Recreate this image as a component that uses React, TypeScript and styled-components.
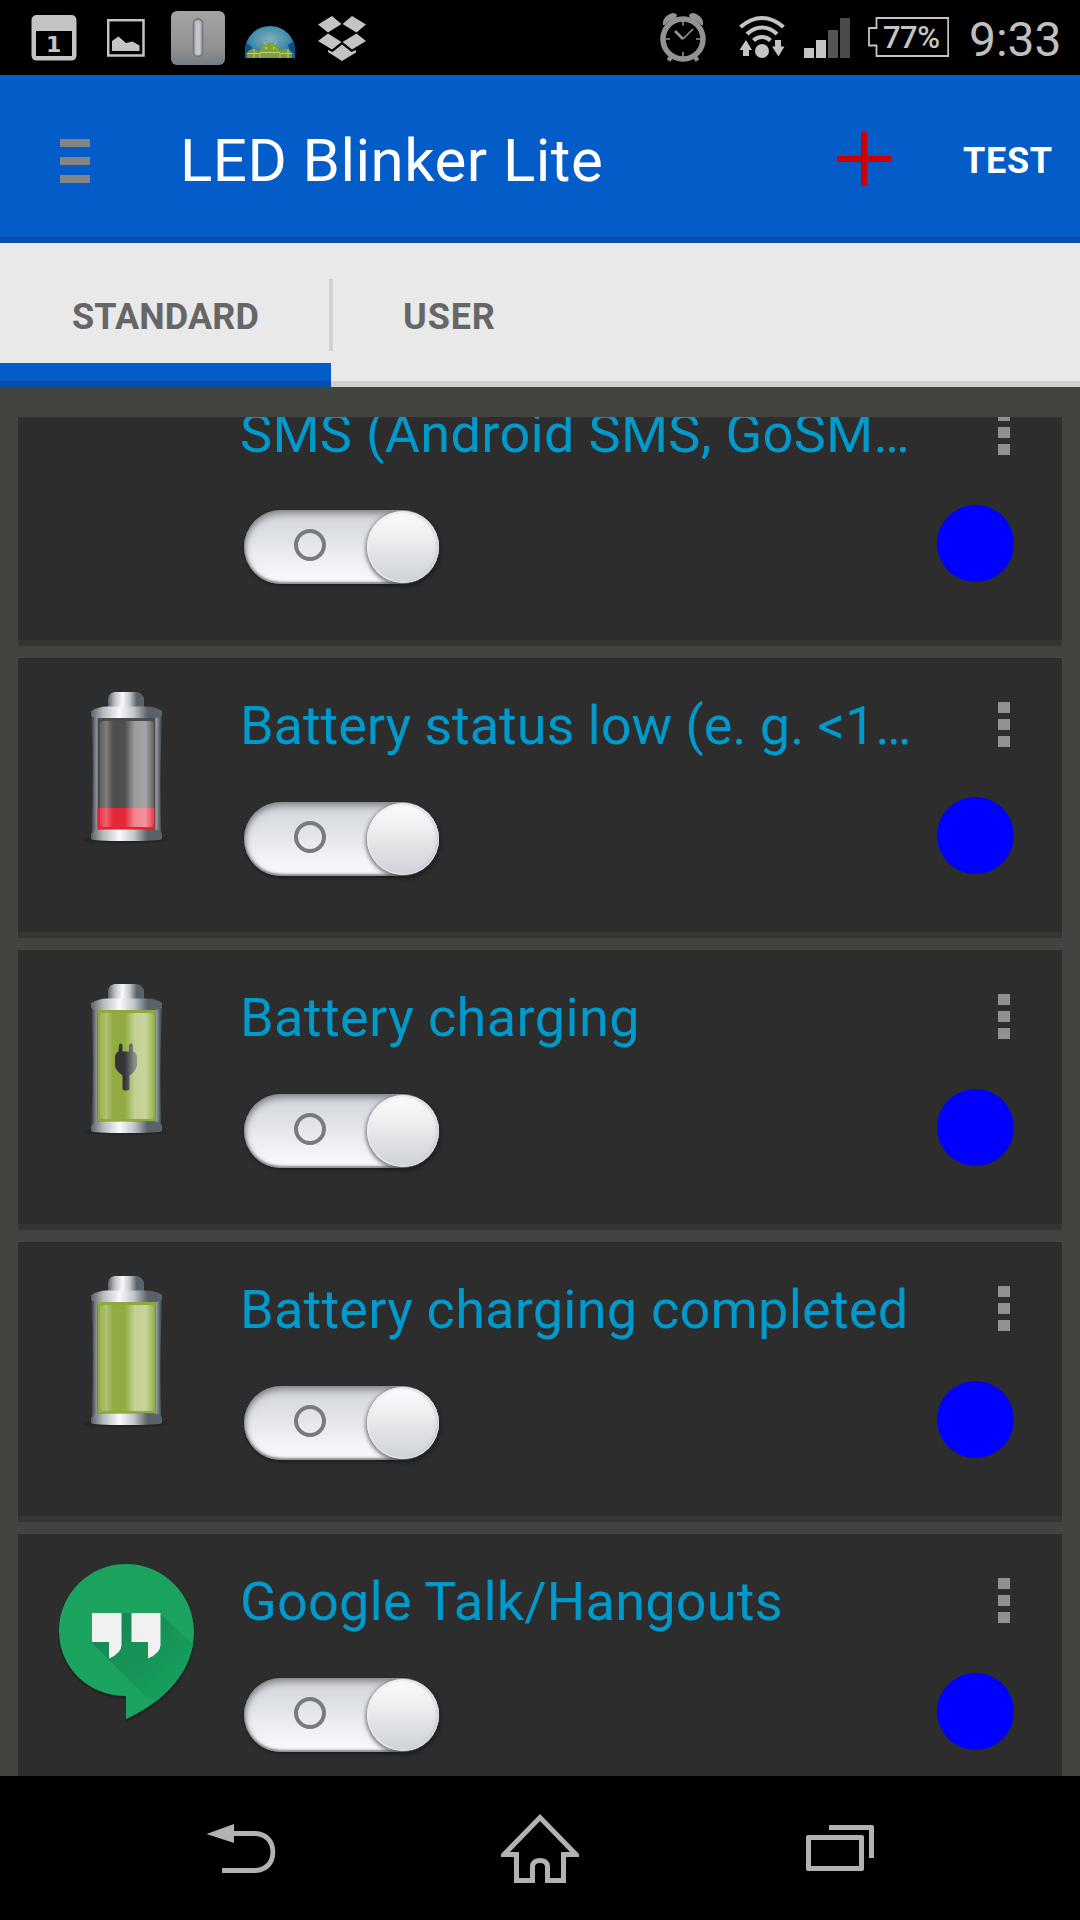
import React from "react";
import styled, { createGlobalStyle } from "styled-components";

const GlobalStyle = createGlobalStyle`
  *, *::before, *::after { box-sizing: border-box; }
  html, body { margin: 0; padding: 0; background: #000; }
  body { font-family: Roboto, "Noto Sans", sans-serif; }
  svg { display: block; flex: none; }
`;

const Screen = styled.div`
  width: 1080px;
  height: 1920px;
  display: flex;
  flex-direction: column;
  overflow: hidden;
  background: #000;
`;

/* ---------- status bar ---------- */

const StatusBar = styled.header`
  height: 75px;
  flex: none;
  display: flex;
  justify-content: space-between;
  padding: 0 20px 0 31px;
  background: #000;
`;

const StatusGroup = styled.div`
  display: flex;
  align-items: flex-start;
`;

const Glyph = styled.svg<{ $left?: number; $top: number }>`
  margin-left: ${(p) => p.$left ?? 0}px;
  margin-top: ${(p) => p.$top}px;
`;

const BatteryLevel = styled.div`
  display: grid;
  width: 81px;
  height: 40px;
  margin: 17px 0 0 18px;
  > * { grid-area: 1 / 1; }
`;

const BatteryText = styled.span`
  padding-left: 15px;
  font-size: 31px;
  line-height: 42px;
  font-weight: 500;
  color: #c4c4c4;
  letter-spacing: -0.5px;
  white-space: nowrap;
`;

const Clock = styled.span`
  margin: 12px 0 0 20px;
  width: 91px;
  font-size: 48px;
  line-height: 56px;
  color: #bfbfbf;
  white-space: nowrap;
`;

/* ---------- action bar ---------- */

const ActionBar = styled.div`
  height: 168px;
  flex: none;
  display: flex;
  align-items: flex-start;
  background: #045cc8;
  border-bottom: 6px solid #0350ab;
`;

const MenuButton = styled.div`
  display: flex;
  flex-direction: column;
  gap: 9.5px;
  width: 30px;
  margin: 63.5px 0 0 60px;
`;

const MenuLine = styled.span`
  height: 8.5px;
  background: #848484;
`;

const Title = styled.h1`
  margin: 51px 0 0 90px;
  flex: 1;
  font-size: 60px;
  line-height: 70px;
  font-weight: 400;
  color: #fff;
  letter-spacing: 0.48px;
  white-space: nowrap;
`;

const AddButton = styled.div`
  margin-top: 57px;
  width: 54px;
  height: 54px;
  background:
    linear-gradient(#cc0000, #cc0000) center / 54px 6px no-repeat,
    linear-gradient(#cc0000, #cc0000) center / 6px 54px no-repeat;
`;

const TestButton = styled.span`
  margin: 65px 0 0 72px;
  width: 117px;
  font-size: 36px;
  line-height: 42px;
  font-weight: 700;
  letter-spacing: 0.7px;
  color: #fff;
`;

/* ---------- tabs ---------- */

const Tabs = styled.nav`
  height: 144px;
  flex: none;
  display: flex;
  background: linear-gradient(#e9e9e9 138px, #d0d0d0 138px);
`;

const Tab = styled.div<{ $active?: boolean; $width: number; $spacing: number }>`
  width: ${(p) => p.$width}px;
  padding: 53px 0 0 72px;
  font-size: 36px;
  line-height: 42px;
  font-weight: 700;
  color: #666;
  letter-spacing: ${(p) => p.$spacing}px;
  white-space: nowrap;
  background: ${(p) =>
    p.$active
      ? "linear-gradient(transparent 120px, #045cc8 120px 138px, #0350ab 138px)"
      : "none"};
`;

const TabDivider = styled.span`
  width: 4px;
  height: 72px;
  margin: 36px -2px 0;
  background: #d2d2d2;
`;

/* ---------- list ---------- */

const Viewport = styled.main`
  height: 1389px;
  flex: none;
  padding: 30px 18px 0;
  background: #434340;
`;

const List = styled.div`
  height: 1359px;
  display: flex;
  flex-direction: column;
  justify-content: flex-start;
  gap: 12px;
  overflow: hidden;
`;

const Card = styled.section<{ $scrolled?: boolean }>`
  height: 280px;
  flex: none;
  display: flex;
  align-items: flex-start;
  margin-top: ${(p) => (p.$scrolled ? -51 : 0)}px;
  background: #2d2d2d;
  border-bottom: 6px solid #353535;
`;

const IconCell = styled.div`
  width: 222px;
  flex: none;
  padding: 28px 0 0 36px;
`;

const Body = styled.div`
  width: 678px;
  flex: none;
  padding-top: 36px;
`;

const Label = styled.h2<{ $spacing: number }>`
  margin: 0;
  height: 64px;
  font-size: 54px;
  line-height: 64px;
  font-weight: 400;
  color: #0099cc;
  letter-spacing: ${(p) => p.$spacing}px;
  white-space: nowrap;
`;

const Side = styled.div`
  display: flex;
  flex-direction: column;
  align-items: flex-end;
  width: 96px;
  padding-top: 43.5px;
`;

const Overflow = styled.div`
  display: flex;
  flex-direction: column;
  gap: 5.5px;
  margin-right: 4.5px;
`;

const Dot = styled.span`
  width: 12px;
  height: 11.5px;
  background: #919191;
`;

const ColorDot = styled.div`
  width: 77px;
  height: 77px;
  margin: 49.5px 0.5px 0 0;
  border-radius: 50%;
  background: #0000ff;
`;

const Switch = styled.div`
  display: flex;
  align-items: center;
  justify-content: space-between;
  width: 195px;
  height: 74px;
  margin: 44px 0 0 4px;
  padding-left: 50px;
  border-radius: 37px;
  background: linear-gradient(#d2d5da 0%, #dadde1 25%, #e8eaed 55%, #f6f7fa 90%);
  box-shadow: inset 0 4px 7px rgba(70, 70, 78, 0.5), inset 0 -2px 2px rgba(80, 80, 80, 0.55),
    inset 2px 0 4px rgba(90, 90, 96, 0.3), 0 2px 3px rgba(0, 0, 0, 0.35);
`;

const OffMark = styled.span`
  width: 32px;
  height: 32px;
  margin-bottom: 4px;
  border: 4.5px solid #777b7e;
  border-radius: 50%;
`;

const Knob = styled.span`
  width: 72px;
  height: 72px;
  border-radius: 50%;
  background: linear-gradient(#f9f9fb 5%, #eceef0 38%, #dfe1e4 62%, #d1d5da 95%);
  box-shadow: inset 0 0 2px 1px rgba(250, 252, 255, 0.85), inset -1px 0 2px 1px rgba(120, 145, 155, 0.5),
    -1px 1px 4px rgba(60, 60, 70, 0.65), 1px 4px 5px rgba(0, 0, 0, 0.25);
  clip-path: inset(0 -8px -10px -10px);
`;

/* ---------- navigation bar ---------- */

const NavBar = styled.footer`
  height: 144px;
  flex: none;
  display: flex;
  align-items: center;
  justify-content: space-between;
  padding: 0 200px;
  background: #000;
`;

/* ---------- drawings ---------- */

type BatteryKind = "low" | "charging" | "full";

function BatteryIcon({ kind }: { kind: BatteryKind }) {
  const id = `bat-${kind}`;
  const low = kind === "low";
  return (
    <svg width="140" height="160" viewBox="54 686 140 160">
      <defs>
        <linearGradient id={`${id}-metal`}>
          <stop offset="0" stopColor="#59636a" />
          <stop offset=".18" stopColor="#b9bcbf" />
          <stop offset=".4" stopColor="#fafafc" />
          <stop offset=".6" stopColor="#c3c7ca" />
          <stop offset=".8" stopColor="#596167" />
          <stop offset="1" stopColor="#59646b" />
        </linearGradient>
        <linearGradient id={`${id}-shine`}>
          <stop offset="0" stopColor="#fff" stopOpacity=".12" />
          <stop offset=".12" stopColor="#fff" stopOpacity=".28" />
          <stop offset=".24" stopColor="#fff" stopOpacity=".02" />
          <stop offset=".46" stopColor="#fff" stopOpacity=".02" />
          <stop offset=".64" stopColor="#fff" stopOpacity=".45" />
          <stop offset=".84" stopColor="#fff" stopOpacity=".5" />
          <stop offset="1" stopColor="#fff" stopOpacity=".12" />
        </linearGradient>
        <linearGradient id={`${id}-side`}>
          <stop offset="0" stopColor="#363c40" />
          <stop offset=".07" stopColor="#899196" />
          <stop offset=".11" stopColor="#50575b" />
          <stop offset=".87" stopColor="#50575b" />
          <stop offset=".92" stopColor="#929ba1" />
          <stop offset="1" stopColor="#373e42" />
        </linearGradient>
      </defs>
      <ellipse cx="126" cy="839.5" rx="43" ry="4" fill="#262626" />
      <path d="M91.500 713H162V720Q159.500 770 161 830V839H91.500V830Q94 770 91.500 718Z" fill={`url(#${id}-side)`} />
      <path d="M108 698Q110 692 115 692H136Q141 692 144 698V708H108Z" fill={`url(#${id}-metal)`} />
      <path d="M91 711Q99 706.500 107 706.500H147Q156 706.500 162 711V716Q156 718.500 150 718.500H102Q95 718.500 91 716Z" fill={`url(#${id}-metal)`} />
      <rect x="98" y="718" width="57" height="111.500" fill={low ? "#4b4b4b" : "#8faa3c"} />
      {low && <rect x="97.500" y="808" width="57" height="21" fill="#e52335" />}
      {kind === "charging" && (
        <path
          d="M119 753.500q0-2 1.500-2t2 2v6h6.500v-6q0-2 2-2t2 2v6q4 1 4 7v7q-1 6-7.500 10v13q0 2-3.500 2t-3.500-2v-13q-7-5-7.500-10v-7q0-6 3.500-7z"
          fill="#303032"
        />
      )}
      <rect x="100" y="721" width="54" height="106" rx="4" fill={`url(#${id}-shine)`} />
      <path d="M91 834Q94 830 99 829.500H155Q161 830 162 834V839Q159 841 126 841T91 839Z" fill={`url(#${id}-metal)`} />
    </svg>
  );
}

function HangoutsIcon() {
  return (
    <svg width="145" height="165" viewBox="54 1562 145 165">
      <defs>
        <clipPath id="bubble">
          <path d="M126 1564C163 1564 194 1594 194 1632C194 1671 164 1702 126 1719V1696C89 1696 59 1668 59 1631C59 1594 89 1564 126 1564Z" />
        </clipPath>
        <linearGradient id="longShadow" x1="0" y1="0" x2="1" y2="1">
          <stop offset="0" stopColor="#188252" />
          <stop offset=".75" stopColor="#15a05c" />
        </linearGradient>
      </defs>
      <path d="M126 1567C164 1567 195 1595 195 1634C195 1675 166 1704 126 1722V1699C88 1699 58 1670 58 1633Z" fill="#242424" />
      <g clipPath="url(#bubble)">
        <rect x="54" y="1562" width="145" height="165" fill="#1ba35f" />
        <path d="M91 1642L146 1697L200 1715V1652L160 1613L121 1613Z" fill="url(#longShadow)" />
      </g>
      <path
        d="M92 1613h29.500v32q0 8-12.500 13.500v-16.500h-17zM131.500 1613h29v32q0 8-12.500 13.500v-16.500h-16.500z"
        fill="#f1f1f1"
      />
    </svg>
  );
}

function NotificationIcons() {
  return (
    <StatusGroup>
      <Glyph $top={15} width="46" height="46" viewBox="31 15 46 46">
        <path
          fillRule="evenodd"
          d="M37 15h34q5.500 0 5.500 5.500v34.500q0 5.500-5.500 5.500h-34q-5.500 0-5.500-5.500v-34.500q0-5.500 5.500-5.500zM36 31v25h36v-25z"
          fill="#c4c4c4"
        />
        <text x="46" y="52" fontFamily="DejaVu Sans" fontWeight="700" fontSize="22" fill="#c4c4c4">1</text>
      </Glyph>
      <Glyph $top={19} $left={30} width="38" height="38" viewBox="107 19 38 38">
        <rect x="108.200" y="20.200" width="35.300" height="35.300" fill="none" stroke="#c4c4c4" strokeWidth="2.500" />
        <path d="M112 41l6.500-4.500 7.500 6.500 6.500-1.500 7 4v5.500h-27.500z" fill="#c4c4c4" />
      </Glyph>
      <Glyph $top={11} $left={26} width="54" height="54" viewBox="171 11 54 54">
        <defs>
          <linearGradient id="plate" x2="0" y2="1">
            <stop offset="0" stopColor="#a3a3a3" />
            <stop offset=".65" stopColor="#929394" />
            <stop offset="1" stopColor="#777d83" />
          </linearGradient>
        </defs>
        <rect x="171" y="11" width="54" height="54" rx="6" fill="url(#plate)" />
        <rect x="193.500" y="19" width="9" height="37.500" rx="4.500" fill="#b3b5b9" stroke="#747a81" strokeWidth="1.800" />
        <rect x="196" y="22" width="4" height="33" rx="2" fill="#c4c6cb" />
      </Glyph>
      <Glyph $top={26} $left={20} width="50" height="32" viewBox="245 26 50 32">
        <defs>
          <radialGradient id="globe" cx=".5" cy=".4" r=".6">
            <stop offset="0" stopColor="#84abbb" />
            <stop offset=".55" stopColor="#4a92ae" />
            <stop offset="1" stopColor="#14699d" />
          </radialGradient>
        </defs>
        <path d="M245 58V51C245 37 256 26 270 26S295 37 295 51V58Z" fill="url(#globe)" />
        <path d="M246 43l6 4-2 7-5-3zM288 45l6-4 1 12-5-2z" fill="#0b508d" />
        <path d="M247 58v-4q1-5 7-5l6 2v7zM280 58v-8q9-4 12 4v4z" fill="#7d9838" />
        <path d="M247 53.500h12M254 49v9M281 53.500h11M288 49v9" stroke="#bdcc83" strokeWidth="1" />
        <path d="M260 52q1-9 10-9t10 9v6h-20z" fill="#83a035" />
        <path d="M260 52.500h20M260 52.500v5.500M280 52.500v5.500M264 42l2 3M276 42l-2 3" stroke="#b9c983" strokeWidth="1" />
        <path d="M265.500 48h1.500M273 48h1.500" stroke="#dbe4b8" strokeWidth="1.500" />
      </Glyph>
      <Glyph $top={15} $left={22} width="49" height="46" viewBox="317 15 49 46">
        <path
          d="M332 16l9.500 8-13.500 8.500-10-8zM352 16l14 8.500-9.500 8-14-8.500zM328 33.500l13.500 8.500-9.500 7.500-14-8.500zM356.500 33.500l9.500 7.500-14 8.500-9.500-7.500zM342 44.500l9.500 7.500 4.500-2v2.500l-14 8.500-14-9v-2l4.500 2z"
          fill="#c4c4c4"
        />
      </Glyph>
    </StatusGroup>
  );
}

function SystemIcons() {
  return (
    <StatusGroup>
      <Glyph $top={13} width="46" height="49" viewBox="660 13 46 49">
        <circle cx="683" cy="39" r="20" fill="none" stroke="#929292" strokeWidth="5.500" />
        <path d="M663 25q-1-6 5-10t9 0l-1 3q-7 2-11 7zM703 25q1-6-5-10t-9 0l1 3q7 2 11 7z" fill="#929292" />
        <path d="M671 57l-2.500 3.500M695 57l2.500 3.500" stroke="#929292" strokeWidth="4.500" />
        <path d="M675 31l8 8" stroke="#929292" strokeWidth="2.800" />
        <path d="M683 39l10-10M683 21v4.500M683 52v5M666 39h4M696 39h5" stroke="#929292" strokeWidth="1.600" />
      </Glyph>
      <Glyph $top={15} $left={33} width="47" height="44" viewBox="739 15 47 44">
        <g fill="none" stroke="#c4c4c4" strokeWidth="4.200">
          <path d="M740.500 27Q751 18 762 18T783.500 27" />
          <path d="M747 34Q754 27.500 762 27.500T777 34" />
          <path d="M753.500 40.500Q757 37 762 37T770.500 40.500" />
        </g>
        <circle cx="762" cy="51" r="7" fill="#c4c4c4" />
        <path d="M746 40l6 10h-3v6h-6v-6h-3.500zM775 40h6v6.500h3.500l-6 10-6.500-10h3z" fill="#c4c4c4" />
      </Glyph>
      <Glyph $top={18} $left={18} width="46" height="40" viewBox="804 18 46 40">
        <path d="M804 48h10v10h-10zM816 40h10v18h-10z" fill="#c4c4c4" />
        <path d="M828 30h10v28h-10z" fill="#545454" />
        <path d="M840 18h10v40h-10z" fill="#4a4a4a" />
      </Glyph>
      <BatteryLevel>
        <svg width="81" height="40" viewBox="868 17 81 40">
          <path d="M876.500 18H948.200V56H876.500V45.500H869V28H876.500Z" fill="none" stroke="#c4c4c4" strokeWidth="1.800" />
        </svg>
        <BatteryText>77%</BatteryText>
      </BatteryLevel>
      <Clock>9:33</Clock>
    </StatusGroup>
  );
}

type Item = { label: string; spacing: number; icon: React.ReactNode };

const items: Item[] = [
  { label: "SMS (Android SMS, GoSM…", spacing: 0.33, icon: null },
  { label: "Battery status low (e. g. <1…", spacing: -0.05, icon: <BatteryIcon kind="low" /> },
  { label: "Battery charging", spacing: 0.4, icon: <BatteryIcon kind="charging" /> },
  { label: "Battery charging completed", spacing: 0.24, icon: <BatteryIcon kind="full" /> },
  { label: "Google Talk/Hangouts", spacing: 0.22, icon: <HangoutsIcon /> },
];

export default function App() {
  return (
    <Screen>
      <GlobalStyle />
      <StatusBar>
        <NotificationIcons />
        <SystemIcons />
      </StatusBar>
      <ActionBar>
        <MenuButton>
          <MenuLine />
          <MenuLine />
          <MenuLine />
        </MenuButton>
        <Title>LED Blinker Lite</Title>
        <AddButton />
        <TestButton>TEST</TestButton>
      </ActionBar>
      <Tabs>
        <Tab $active $width={331} $spacing={0.15}>STANDARD</Tab>
        <TabDivider />
        <Tab $width={260} $spacing={0.9}>USER</Tab>
      </Tabs>
      <Viewport>
        <List>
          {items.map((item, i) => (
            <Card key={item.label} $scrolled={i === 0}>
              <IconCell>{item.icon}</IconCell>
              <Body>
                <Label $spacing={item.spacing}>{item.label}</Label>
                <Switch>
                  <OffMark />
                  <Knob />
                </Switch>
              </Body>
              <Side>
                <Overflow>
                  <Dot />
                  <Dot />
                  <Dot />
                </Overflow>
                <ColorDot />
              </Side>
            </Card>
          ))}
        </List>
      </Viewport>
      <NavBar>
        <svg width="82" height="80" viewBox="200 1808 82 80">
          <path d="M206.500 1834L234 1824V1843Z" fill="#b2b2b2" />
          <path
            fillRule="evenodd"
            d="M233 1831H254C267 1831 275.300 1839 275.300 1852S267 1873 254 1873H222V1868H254C264 1868 270.500 1862 270.500 1852S264 1836 254 1836H233Z"
            fill="#b2b2b2"
          />
        </svg>
        <svg width="80" height="80" viewBox="501 1808 80 80">
          <path
            fillRule="evenodd"
            d="M540 1814L579 1854V1857H566V1883H545V1867Q545 1863 540 1863T535 1867V1883H514V1857H501V1854ZM540 1821L510 1852H519V1878H530V1866Q531 1858 540 1858T550 1866V1878H561V1852H570Z"
            fill="#b2b2b2"
          />
        </svg>
        <svg width="80" height="80" viewBox="800 1808 80 80">
          <path
            fillRule="evenodd"
            d="M808 1835H862Q864 1835 864 1837V1869Q864 1871 862 1871H808Q806 1871 806 1869V1837Q806 1835 808 1835ZM811 1840V1866H859V1840Z"
            fill="#b2b2b2"
          />
          <path d="M829 1825H872Q874 1825 874 1827V1858H869V1830H829Z" fill="#b2b2b2" />
        </svg>
      </NavBar>
    </Screen>
  );
}
